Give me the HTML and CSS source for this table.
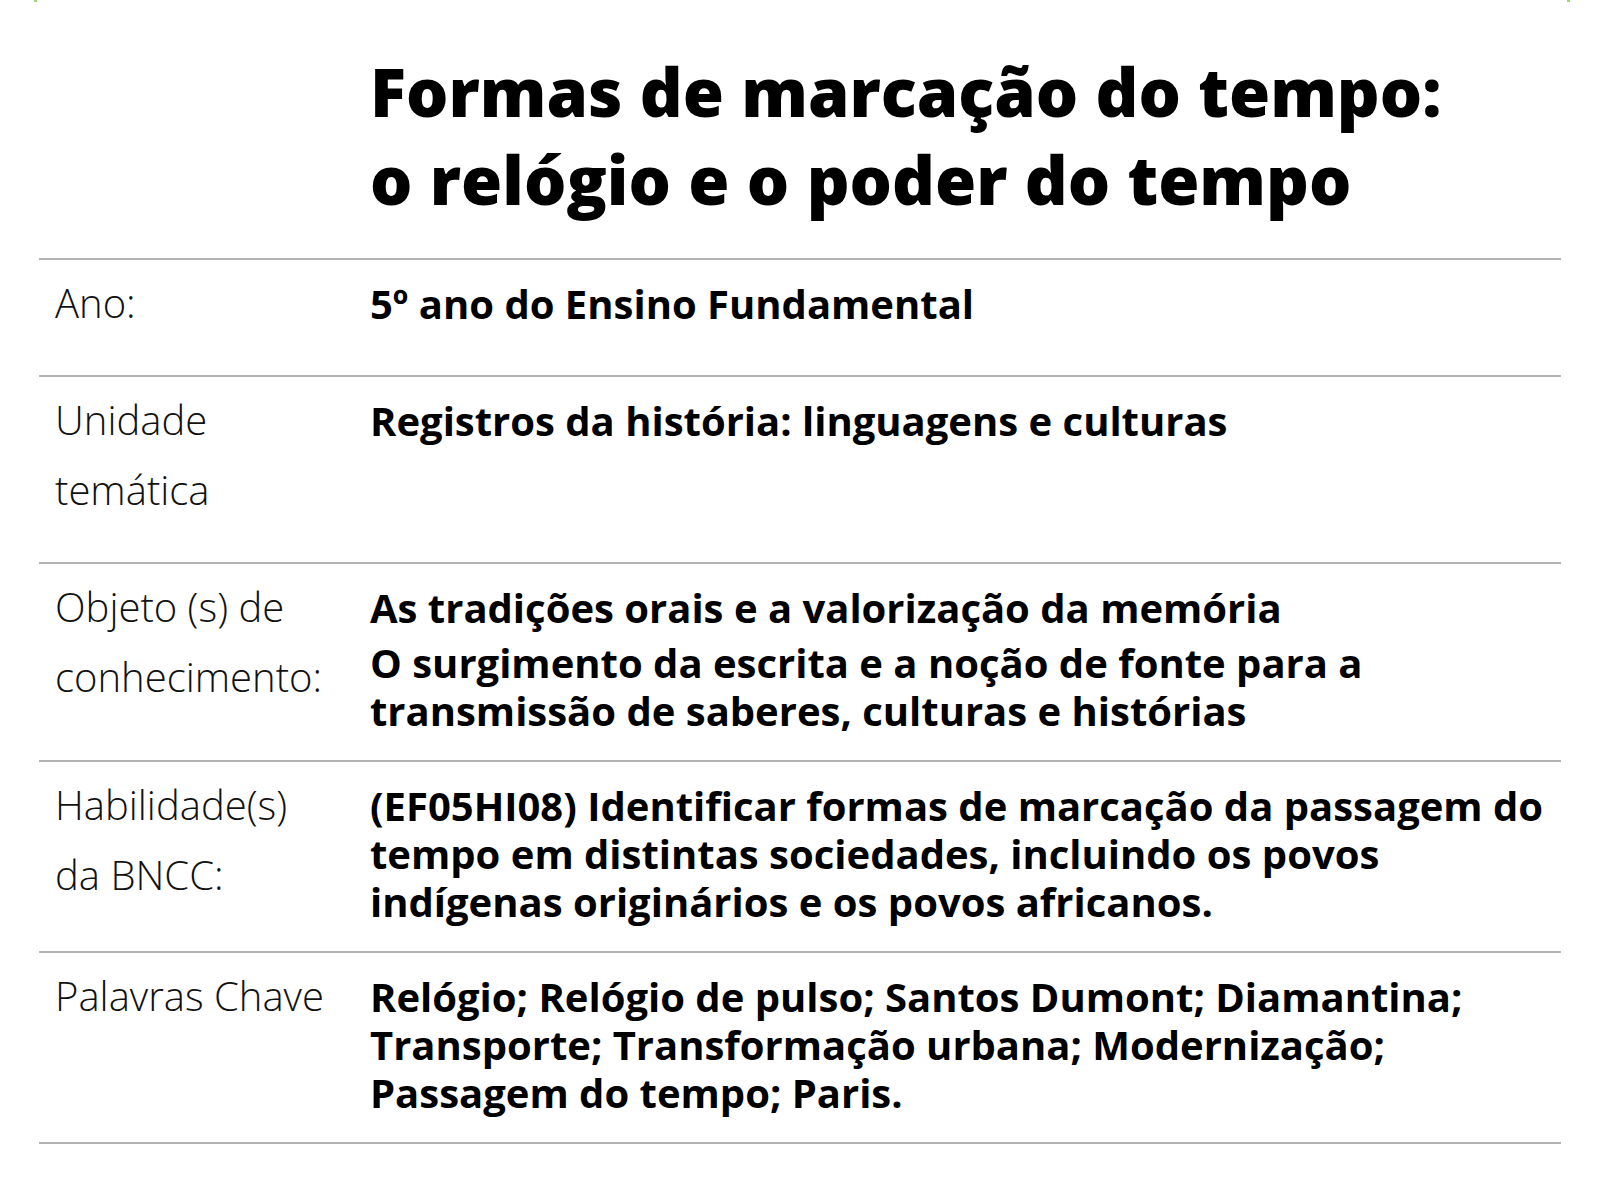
FILE: index.html
```html
<!DOCTYPE html>
<html lang="pt-BR">
<head>
<meta charset="utf-8">
<title>Formas de marcação do tempo</title>
<link rel="stylesheet" href="styles.css">
</head>
<body>
<span class="corner corner-left"></span>
<span class="corner corner-right"></span>
<main class="sheet">
  <h1 class="title">Formas de marcação do tempo:<br>o relógio e o poder do tempo</h1>
  <div class="info">
    <div class="row">
      <div class="label">Ano:</div>
      <div class="value"><p>5º ano do Ensino Fundamental</p></div>
    </div>
    <div class="row">
      <div class="label">Unidade<br>temática</div>
      <div class="value"><p>Registros da história: linguagens e culturas</p></div>
    </div>
    <div class="row">
      <div class="label">Objeto (s) de<br>conhecimento:</div>
      <div class="value">
        <p>As tradições orais e a valorização da memória</p>
        <p>O surgimento da escrita e a noção de fonte para a transmissão de saberes, culturas e histórias</p>
      </div>
    </div>
    <div class="row">
      <div class="label">Habilidade(s)<br>da BNCC:</div>
      <div class="value"><p>(EF05HI08) Identificar formas de marcação da passagem do tempo em distintas sociedades, incluindo os povos indígenas originários e os povos africanos.</p></div>
    </div>
    <div class="row">
      <div class="label">Palavras Chave</div>
      <div class="value"><p>Relógio; Relógio de pulso; Santos Dumont; Diamantina; Transporte; Transformação urbana; Modernização; Passagem do tempo; Paris.</p></div>
    </div>
  </div>
</main>
</body>
</html>
```

FILE: styles.css
```css
html, body {
  margin: 0;
  padding: 0;
  background: #ffffff;
}

body {
  font-family: "Open Sans", "Liberation Sans", sans-serif;
  color: #000;
  position: relative;
  width: 1600px;
  height: 1200px;
  overflow: hidden;
}

.corner {
  position: absolute;
  top: 0;
  width: 3px;
  height: 2px;
  background: #9fd57a;
}
.corner-left { left: 34px; }
.corner-right { left: 1567px; }

.sheet {
  padding: 48px 39px 0 39px;
}

.title {
  margin: 0 0 34px 0;
  padding-left: 331px;
  font-size: 66.7px;
  line-height: 88px;
  font-weight: 800;
  letter-spacing: 0;
}

.info {
  border-bottom: 2px solid #b3b3b3;
}

.row {
  display: flex;
  border-top: 2px solid #b3b3b3;
}

.label {
  flex: 0 0 331px;
  box-sizing: border-box;
  padding: 8px 0 37px 16px;
  font-size: 40px;
  line-height: 70px;
  font-weight: 300;
  color: #111;
}

.value {
  flex: 1 1 auto;
  padding: 20px 0 25px 0;
  font-size: 40px;
  line-height: 48px;
  font-weight: 700;
}

.value p {
  margin: 0;
}
.value p + p {
  margin-top: 7px;
}
```
